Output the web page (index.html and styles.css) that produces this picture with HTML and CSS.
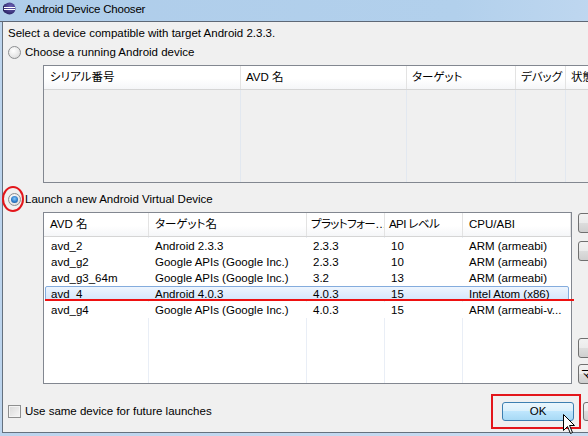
FILE: index.html
```html
<!DOCTYPE html>
<html lang="ja">
<head>
    <meta charset="UTF-8">
    <title>Android Device Chooser</title>
    <link rel="stylesheet" href="styles.css">
</head>
<body>
    <div class="window">
        <div class="titlebar">
            <svg class="app-icon" viewBox="0 0 13 13">
                <defs>
                    <radialGradient id="sphere" cx="0.6" cy="0.35" r="0.7">
                        <stop offset="0" stop-color="#6d63b8"/>
                        <stop offset="1" stop-color="#2a2366"/>
                    </radialGradient>
                </defs>
                <circle cx="6.5" cy="6.5" r="6" fill="url(#sphere)"/>
                <rect x="1" y="5" width="11" height="1" fill="#fff"/>
                <rect x="1" y="7" width="11" height="1" fill="#fff"/>
                <path d="M3 1.8 A6 6 0 0 0 3 11.2 A5 5 0 0 1 3 1.8 Z" fill="#231c55"/>
            </svg>
            <span class="title">Android Device Chooser</span>
        </div>

        <div class="client">
            <p class="intro">Select a device compatible with target Android 2.3.3.</p>

            <label class="option"><span class="radio"></span>Choose a running Android device</label>

            <!-- running devices (disabled) -->
            <div class="list list-devices">
                <div class="list-head">
                    <div>シリアル番号</div>
                    <div>AVD 名</div>
                    <div>ターゲット</div>
                    <div>デバッグ</div>
                    <div>状態</div>
                </div>
                <div class="list-body"></div>
            </div>

            <label class="option"><span class="radio checked"><span class="mark-circle"></span></span>Launch a new Android Virtual Device</label>

            <div class="avd-area">
                <div class="list list-avds">
                    <div class="list-head">
                        <div>AVD 名</div>
                        <div>ターゲット名</div>
                        <div class="tight">プラットフォー…</div>
                        <div class="tight">API レベル</div>
                        <div>CPU/ABI</div>
                    </div>
                    <div class="list-body">
                        <div class="row"><div>avd_2</div><div>Android 2.3.3</div><div>2.3.3</div><div>10</div><div>ARM (armeabi)</div></div>
                        <div class="row"><div>avd_g2</div><div>Google APIs (Google Inc.)</div><div>2.3.3</div><div>10</div><div>ARM (armeabi)</div></div>
                        <div class="row"><div>avd_g3_64m</div><div>Google APIs (Google Inc.)</div><div>3.2</div><div>13</div><div>ARM (armeabi)</div></div>
                        <div class="row selected"><div>avd_4</div><div>Android 4.0.3</div><div>4.0.3</div><div>15</div><div>Intel Atom (x86)</div><span class="mark-line"></span></div>
                        <div class="row"><div>avd_g4</div><div>Google APIs (Google Inc.)</div><div>4.0.3</div><div>15</div><div>ARM (armeabi-v...</div></div>
                    </div>
                </div>
                <div class="side-buttons">
                    <button class="btn">開始...</button>
                    <button class="btn">詳細...</button>
                    <button class="btn push-down">リフレッシュ</button>
                    <button class="btn">マネージャー...</button>
                </div>
            </div>

            <div class="bottom-row">
                <label class="check"><span class="checkbox"></span>Use same device for future launches</label>
                <div class="actions">
                    <span class="ok-wrap">
                        <button class="btn btn-ok">OK</button>
                        <span class="mark-box"></span>
                        <svg class="cursor" width="13" height="21" viewBox="0 0 13 21">
                            <path d="M0.5 0.5 V16.5 L4.5 12.5 L7.5 19.5 L9.5 18.5 L6.5 11.5 H11.5 Z" fill="#fff" stroke="#000"/>
                        </svg>
                    </span>
                    <button class="btn">キャンセル</button>
                </div>
            </div>
        </div>
    </div>
</body>
</html>
```

FILE: styles.css
```css
* {
    margin: 0;
    padding: 0;
    box-sizing: border-box;
}
html, body {
    width: 588px;
    height: 436px;
    overflow: hidden;
}
body {
    font-family: "Liberation Sans", "Noto Sans CJK JP", sans-serif;
    font-size: 11.5px;
    line-height: 16px;
    font-feature-settings: "palt";
    color: #000;
    background: linear-gradient(to right, #bcd4ed, #c9dcf1);
}
.window {
    width: 700px;
}

/* title bar */
.titlebar {
    height: 22px;
    display: flex;
    align-items: flex-start;
    padding: 1px 0 0 3px;
    border-bottom: 1px solid #5e6876;
    background: linear-gradient(to right, #afcdea 0%, #b2d0ec 65%, #c8dcf2 100%);
}
.app-icon {
    width: 13px;
    height: 13px;
    margin-top: 1px;
}
.title {
    margin-left: 9px;
    letter-spacing: -0.2px;
}

/* dialog body */
.client {
    margin-left: 2px;
    width: 680px;
    height: 411px;
    border-left: 1px solid #65717e;
    border-bottom: 1px solid #65717e;
    background-color: #f0f0f0;
    padding: 3px 0 0 5px;
}
.intro {
    height: 16px;
}
.option {
    display: flex;
    align-items: center;
    height: 16px;
    margin-top: 3px;
}
.option + .option,
.list + .option {
    margin-top: 8px;
}
.radio {
    position: relative;
    width: 13px;
    height: 13px;
    margin-right: 4px;
    border-radius: 50%;
    border: 1px solid #8c8e90;
    background: radial-gradient(circle at 40% 35%, #ffffff, #e4e4e4 65%, #cdcdcd);
}
.radio.checked::after {
    content: "";
    position: absolute;
    left: 2px;
    top: 2px;
    width: 7px;
    height: 7px;
    border-radius: 50%;
    background: radial-gradient(circle at 50% 40%, #86c8fb, #2d7cc9 55%, #1a4a86);
}
.mark-circle {
    position: absolute;
    left: -7px;
    top: -8px;
    width: 22px;
    height: 26px;
    border: 2px solid #e3161b;
    border-radius: 50%;
}

/* list views */
.list {
    display: flex;
    flex-direction: column;
    border: 1px solid #828790;
    background-color: #fff;
}
.list-head {
    display: grid;
    height: 24px;
    border-bottom: 1px solid #d5d5d5;
    background: linear-gradient(#ffffff, #ffffff 55%, #f5f6f8);
}
.list-head > div {
    border-right: 1px solid #e3e3e3;
    padding-left: 6px;
    line-height: 23px;
    white-space: nowrap;
    overflow: hidden;
}
.list-head > div.tight {
    padding-left: 4px;
    letter-spacing: -0.6px;
}
.list-body {
    flex: 1;
}
.list-devices {
    margin: 5px 0 0 35px;
    width: 620px;
    height: 118px;
}
.list-devices .list-head {
    grid-template-columns: 197px 166px 109px 50px 96px;
}
.list-devices .list-head > div + div {
    padding-left: 5px;
}
.list-devices .list-body {
    background:
        linear-gradient(#e2e8f0, #e2e8f0) 196px 0 / 1px 100% no-repeat,
        linear-gradient(#e2e8f0, #e2e8f0) 362px 0 / 1px 100% no-repeat,
        linear-gradient(#e2e8f0, #e2e8f0) 471px 0 / 1px 100% no-repeat,
        linear-gradient(#e2e8f0, #e2e8f0) 521px 0 / 1px 100% no-repeat,
        #f0f0f0;
}

.avd-area {
    display: flex;
    gap: 6px;
    margin: 5px 0 0 35px;
}
.list-avds {
    width: 529px;
    height: 172px;
}
.list-avds .list-head,
.list-avds .row {
    grid-template-columns: 105px 158px 78px 78px 108px;
}
.list-avds .list-body {
    padding-top: 1px;
    background:
        linear-gradient(#e9eef6, #e9eef6) 104px 0 / 1px 100% no-repeat,
        linear-gradient(#e9eef6, #e9eef6) 262px 0 / 1px 100% no-repeat,
        linear-gradient(#e9eef6, #e9eef6) 340px 0 / 1px 100% no-repeat,
        linear-gradient(#e9eef6, #e9eef6) 418px 0 / 1px 100% no-repeat,
        #fff;
}
.row {
    display: grid;
    position: relative;
    height: 16px;
    background-color: #fff;
}
.row > div {
    position: relative;
    padding-left: 7px;
    white-space: nowrap;
    overflow: hidden;
}
.row > div + div {
    padding-left: 6px;
}
.row.selected {
    background: transparent;
}
.row.selected::before {
    content: "";
    position: absolute;
    top: 0;
    bottom: 1px;
    left: 1px;
    right: 2px;
    border: 1px solid #84acdd;
    border-radius: 2px;
    background: linear-gradient(#eef5fe, #d4e6fb);
}
.mark-line {
    position: absolute;
    left: 1px;
    right: -3px;
    top: 13px;
    height: 2px;
    background-color: #ee1111;
}

/* buttons */
.btn {
    height: 20px;
    font: inherit;
    color: #000;
    border: 1px solid #707070;
    border-radius: 3px;
    background: linear-gradient(#f2f2f2 0%, #ebebeb 50%, #dddddd 50%, #cfcfcf 100%);
    white-space: nowrap;
    overflow: hidden;
}
.side-buttons {
    width: 80px;
    display: flex;
    flex-direction: column;
    gap: 8px;
    padding-top: 1px;
}
.side-buttons .btn {
    width: 80px;
}
.side-buttons .push-down {
    margin-top: auto;
    margin-bottom: -2px;
}

.bottom-row {
    display: flex;
    align-items: center;
    height: 20px;
    margin-top: 17px;
}
.check {
    display: flex;
    align-items: center;
}
.checkbox {
    width: 13px;
    height: 13px;
    margin-right: 4px;
    border: 1px solid #8e8f8f;
    box-shadow: inset 0 0 0 1px #f4f4f4;
    background: linear-gradient(135deg, #d9d9d9, #f7f7f7);
}
.actions {
    display: flex;
    align-items: center;
    gap: 9px;
    margin-left: auto;
    margin-right: 27px;
}
.actions .btn {
    width: 72px;
    height: 19px;
}
.ok-wrap {
    position: relative;
    display: flex;
}
.btn-ok {
    border-color: #3c7fb1;
    background: linear-gradient(#eaf6fd 0%, #d9f0fc 50%, #bee6fd 50%, #a7d9f5 100%);
}
.mark-box {
    position: absolute;
    left: -11px;
    top: -8px;
    width: 90px;
    height: 35px;
    border: 2px solid #e3161b;
}
.cursor {
    position: absolute;
    left: 61px;
    top: 12px;
}
```
